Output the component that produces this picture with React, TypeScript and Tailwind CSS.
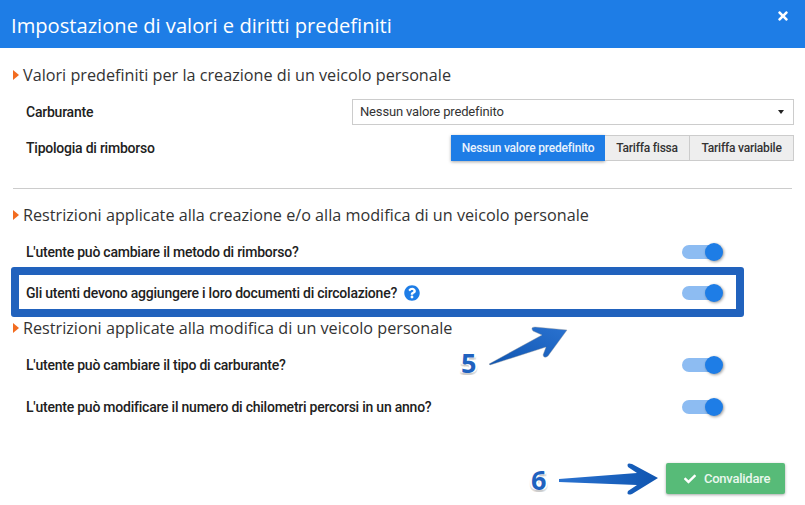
import React from "react";
import { FaCheck, FaTimes, FaQuestionCircle } from "react-icons/fa";

const sans = "font-['Open_Sans',sans-serif]";

function SectionTitle({ children, className }: { children: React.ReactNode; className: string }) {
  return (
    <div className={`flex items-center pl-[13px] ${className}`}>
      <span className="w-0 h-0 border-y-[5px] border-y-transparent border-l-[6px] border-l-[#f26c21]" />
      <span className={`ml-[4px] text-[16.2px] leading-[22px] text-[#333] ${sans}`}>{children}</span>
    </div>
  );
}

function Toggle() {
  return (
    <div className="relative w-[39px] h-[20px]">
      <div className="absolute left-0 top-[3px] w-[36px] h-[14px] rounded-full bg-[#8dbcf2]" />
      <div className="absolute right-[-2px] top-[1px] w-[18px] h-[18px] rounded-full bg-[#1e7de6] shadow-[1px_1px_3px_rgba(0,0,0,0.4)]" />
    </div>
  );
}

function ToggleRow({ label, help, className }: { label: string; help?: boolean; className: string }) {
  return (
    <div className={`flex items-center justify-between pl-[26px] pr-[84px] h-[20px] ${className}`}>
      <div className="flex items-center gap-[7px] text-[14px] tracking-[-0.23px] font-medium text-[#212121]">
        {label}
        {help && <FaQuestionCircle className="text-[16px] text-[#1e7de6]" />}
      </div>
      <Toggle />
    </div>
  );
}

function Arrow5() {
  return (
    <svg className="absolute left-[480px] top-[320px]" width="95" height="60" viewBox="0 0 95 60">
      <defs>
        <linearGradient id="a5" x1="0" y1="1" x2="1" y2="0">
          <stop offset="0" stopColor="#0f55b0" />
          <stop offset="1" stopColor="#2a72d0" />
        </linearGradient>
      </defs>
      <path d="M9 44 L62 15 L53 11 Q50 7 55 7 L87 10 L68 36 Q64 39 63 35 L66 27 L10 45 Z" fill="url(#a5)" stroke="#999" strokeWidth="0.4" />
    </svg>
  );
}

function Arrow6() {
  return (
    <svg className="absolute left-[555px] top-[458px]" width="105" height="44" viewBox="0 0 105 44">
      <defs>
        <linearGradient id="a6" x1="0" y1="0" x2="1" y2="0">
          <stop offset="0" stopColor="#2a72d0" />
          <stop offset="1" stopColor="#0f55b0" />
        </linearGradient>
      </defs>
      <path d="M4 21 L82 15 L73 9 Q71 4 77 6 L103 20 L77 36 Q71 38 73 33 L82 27 L4 24 Z" fill="url(#a6)" />
    </svg>
  );
}

function Num({ n, className }: { n: string; className: string }) {
  return (
    <span className={`absolute text-[27px] leading-none font-bold text-[#1f62bf] ${sans} [text-shadow:-2px_0_#fff,2px_0_#fff,0_2px_#ccc,0_-2px_#fff,-2px_2px_#ddd,2px_2px_#ddd] ${className}`}>
      {n}
    </span>
  );
}

export default function App() {
  return (
    <div className="relative w-[805px] h-[505px] overflow-hidden bg-white font-['Roboto',sans-serif]">
      <div className={`flex justify-between h-[48px] bg-[#1e7de6] text-white pl-[11px] pr-[15px] ${sans}`}>
        <h1 className="text-[20.15px] leading-[50px]">Impostazione di valori e diritti predefiniti</h1>
        <FaTimes className="mt-[9px] text-[14px]" />
      </div>

      <SectionTitle className="mt-[16px]">Valori predefiniti per la creazione di un veicolo personale</SectionTitle>

      <div className="flex items-center justify-between mt-[13px] pl-[26px] pr-[11px]">
        <span className="text-[14px] tracking-[-0.23px] font-medium text-[#212121]">Carburante</span>
        <div className="flex items-center justify-between w-[442px] h-[26px] border border-[#ccc] pl-[7px] pr-[9px] text-[13px] tracking-[-0.16px] text-[#333]">
          Nessun valore predefinito
          <span className="w-0 h-0 border-x-[3.5px] border-x-transparent border-t-[4px] border-t-[#222]" />
        </div>
      </div>

      <div className="flex items-center justify-between mt-[10px] pl-[26px] pr-[11px]">
        <span className="text-[14px] tracking-[-0.23px] font-medium text-[#212121]">Tipologia di rimborso</span>
        <div className="flex h-[26px] text-[12px] tracking-[-0.2px] font-medium">
          <div className="flex items-center justify-center w-[154px] bg-[#1e7de6] text-[#e8f2fd] shadow-[0_1px_3px_rgba(0,0,0,0.35)]">Nessun valore predefinito</div>
          <div className="flex items-center justify-center w-[84px] bg-[#eee] border-y border-[#ccc] text-[#333]">Tariffa fissa</div>
          <div className="flex items-center justify-center w-[105px] bg-[#eee] border border-[#ccc] text-[#333]">Tariffa variabile</div>
        </div>
      </div>

      <hr className="mt-[27px] mx-[13px] border-[#ccc]" />

      <SectionTitle className="mt-[15px]">Restrizioni applicate alla creazione e/o alla modifica di un veicolo personale</SectionTitle>
      <ToggleRow className="mt-[16px]" label="L'utente può cambiare il metodo di rimborso?" />
      <ToggleRow className="mt-[21px]" label="Gli utenti devono aggiungere i loro documenti di circolazione?" help />
      <SectionTitle className="mt-[14px]">Restrizioni applicate alla modifica di un veicolo personale</SectionTitle>
      <ToggleRow className="mt-[16px]" label="L'utente può cambiare il tipo di carburante?" />
      <ToggleRow className="mt-[22px]" label="L'utente può modificare il numero di chilometri percorsi in un anno?" />

      <div className="flex justify-end mt-[46px] pr-[20px]">
        <button className="flex items-center justify-start pl-[18px] gap-[8px] w-[119px] h-[31px] rounded-[2px] bg-[#57bb78] text-[#eaf7ee] text-[13px] tracking-[-0.25px] font-medium shadow-[0_1px_3px_rgba(0,0,0,0.35)]">
          <FaCheck className="text-[12px] text-white" />
          Convalidare
        </button>
      </div>

      <div className="absolute left-[11px] top-[267px] w-[733px] h-[50px] rounded-[3px] border-[8px] border-[#2162bd]" />
      <Arrow5 />
      <Num n="5" className="left-[461px] top-[349px]" />
      <Arrow6 />
      <Num n="6" className="left-[531px] top-[466px]" />
    </div>
  );
}
